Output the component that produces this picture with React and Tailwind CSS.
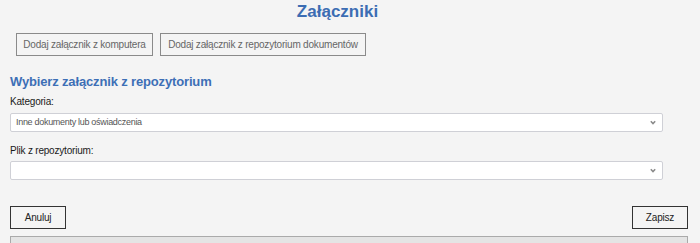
import React from "react";

function Chevron() {
  return (
    <svg width="6" height="5" viewBox="0 0 6 5" className="shrink-0 mr-[1px]">
      <path d="M0.8 1.2 L3 3.6 L5.2 1.2" fill="none" stroke="#8a8a8a" strokeWidth="1.5" />
    </svg>
  );
}

function Select({ value }) {
  return (
    <div className="w-[653px] h-[19px] bg-white border border-[#cfd0d6] rounded-[2px] flex items-center justify-between pl-[5px] pr-[5px]">
      <span className="text-[9px] leading-[17px] text-[#555] tracking-[-0.3px]">{value}</span>
      <Chevron />
    </div>
  );
}

export default function App() {
  return (
    <div
      className="w-[700px] h-[243px] bg-[#f4f4f4] overflow-hidden"
      style={{ fontFamily: '"Liberation Sans", Arial, sans-serif' }}
    >
      <div className="w-[675px] h-6 flex justify-center">
        <h1 className="text-[17px] leading-6 font-bold text-[#3c6db3]">Załączniki</h1>
      </div>
      <div className="flex gap-[7px] pl-4 mt-[9px]">
        <button className="w-[137px] h-[23px] border border-[#8a8a8a] text-[10px] text-[#666] tracking-[-0.2px] bg-transparent">
          Dodaj załącznik z komputera
        </button>
        <button className="w-[206px] h-[23px] border border-[#8a8a8a] text-[10px] text-[#666] tracking-[-0.2px] bg-transparent">
          Dodaj załącznik z repozytorium dokumentów
        </button>
      </div>
      <div className="pl-[10px]">
        <h2 className="mt-[17px] text-[13px] leading-[18px] font-bold text-[#3d6fb6] tracking-[-0.15px]">
          Wybierz załącznik z repozytorium
        </h2>
        <div className="mt-1 text-[10px] leading-[14px] text-[#1a1a1a] tracking-[-0.2px]">Kategoria:</div>
        <div className="mt-1">
          <Select value="Inne dokumenty lub oświadczenia" />
        </div>
        <div className="mt-3 text-[10px] leading-[14px] text-[#1a1a1a] tracking-[-0.2px]">Plik z repozytorium:</div>
        <div className="mt-[3px]">
          <Select value="" />
        </div>
        <div className="mt-[26px] w-[678px] flex justify-between">
          <button className="w-[56px] h-[23px] border border-[#333] text-[10px] text-[#222] tracking-[-0.2px]">
            Anuluj
          </button>
          <button className="w-[56px] h-[23px] border border-[#333] text-[10px] text-[#222] tracking-[-0.2px]">
            Zapisz
          </button>
        </div>
        <div className="mt-[7px] w-[678px] h-[20px] bg-[#e4e4e4] border border-[#aaa]" />
      </div>
    </div>
  );
}
